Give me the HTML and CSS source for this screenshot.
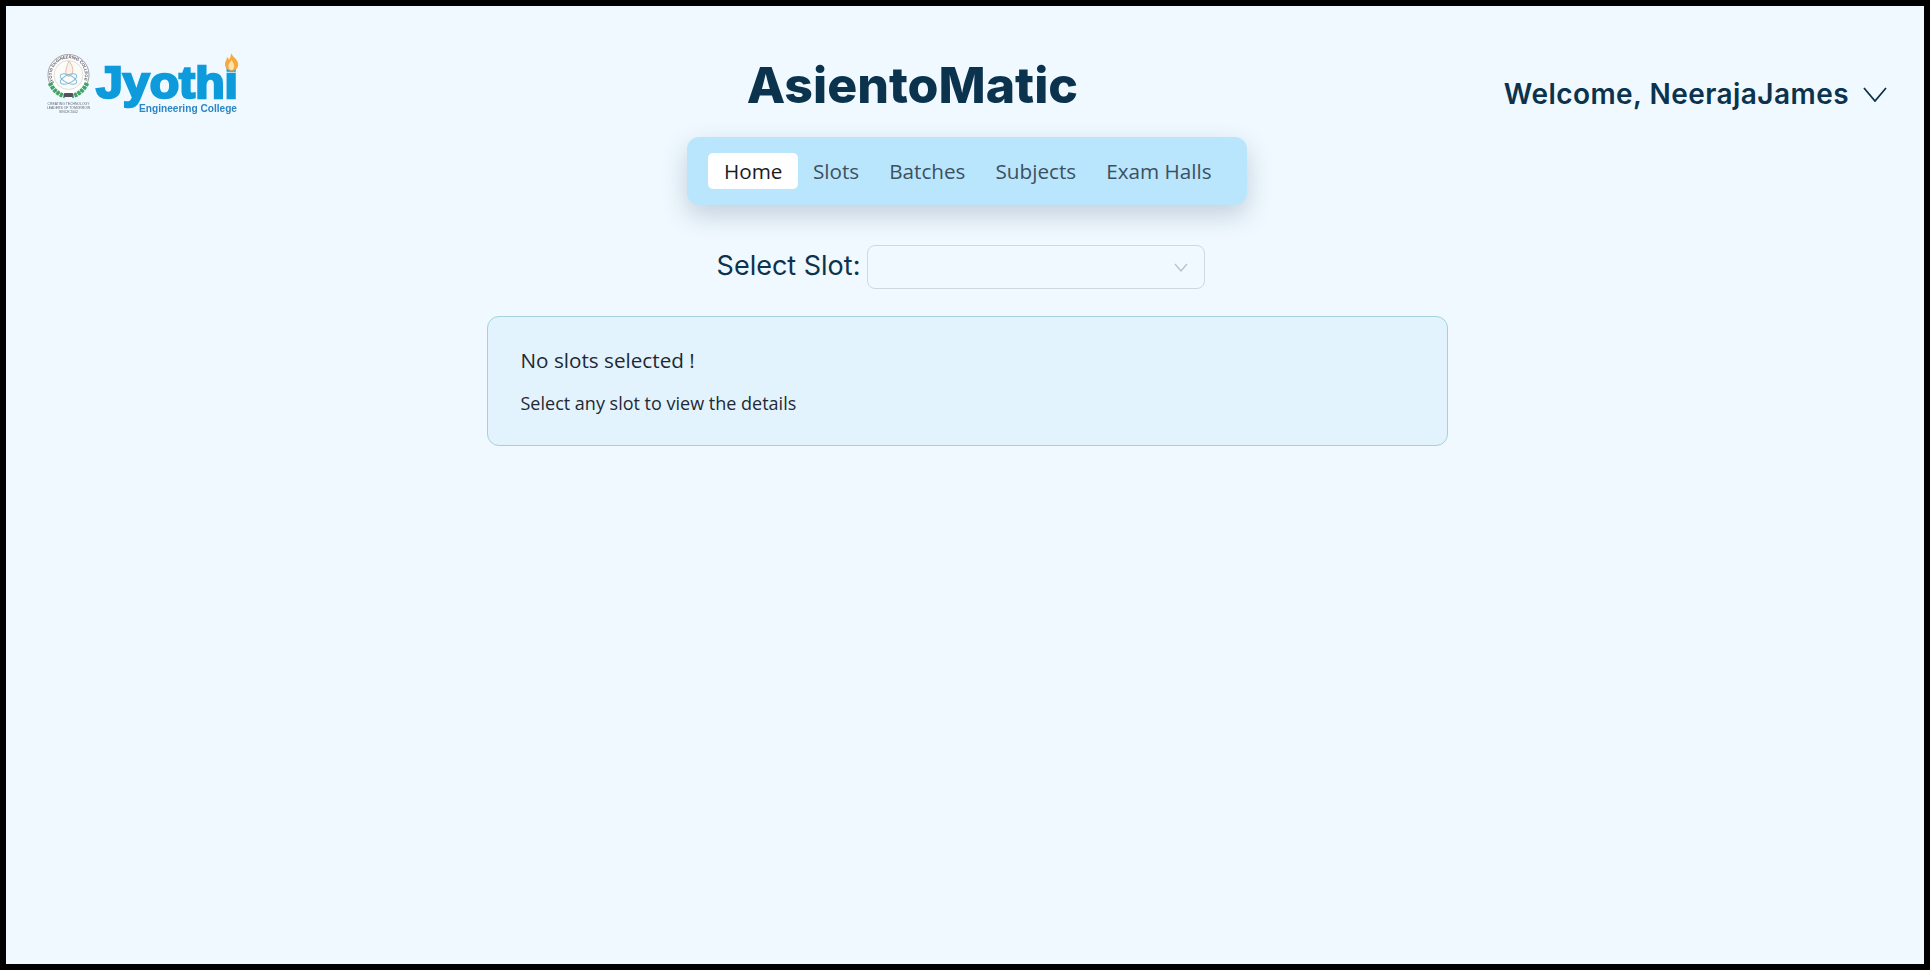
FILE: index.html
```html
<!DOCTYPE html>
<html lang="en">
<head>
    <meta charset="UTF-8">
    <title>AsientoMatic</title>
    <link rel="stylesheet" href="styles.css">
</head>
<body>
    <header class="top">
        <svg class="logo" viewBox="0 0 194 64" width="194" height="64">
            <defs>
                <path id="ring-text" d="M8.200 31A16.500 16.500 0 1 1 36.800 31"/>
            </defs>
            <circle cx="22.500" cy="23" r="20.500" fill="#fff" stroke="#8d8a94" stroke-width=".8"/>
            <circle cx="22.500" cy="23" r="14.500" fill="#fbfbf8" stroke="#c4bfbf" stroke-width=".5"/>
            <text class="logo-ring"><textPath href="#ring-text">JYOTHI ENGINEERING COLLEGE</textPath></text>
            <path d="M23 9c3 4 5 8 3 13-1 3-5 3-6 0-1-4 1-8 3-13z" fill="#fdf2ea" stroke="#dcae90" stroke-width=".8"/>
            <g fill="none" stroke="#79b7d6" stroke-width=".9">
                <ellipse cx="22.500" cy="27" rx="9" ry="4" transform="rotate(25 22.500 27)"/>
                <ellipse cx="22.500" cy="27" rx="9" ry="4" transform="rotate(-25 22.500 27)"/>
            </g>
            <path class="laurel" d="M4 31c3 7 9 12 15 13"/>
            <path class="laurel" d="M41 31c-3 7-9 12-15 13"/>
            <rect x="18" y="41" width="9" height="4" rx="1" fill="#55505a"/>
            <text class="logo-small" x="22.500" y="53">CREATING TECHNOLOGY</text>
            <text class="logo-small" x="22.500" y="57">LEADERS OF TOMORROW</text>
            <text class="logo-small" x="22.500" y="61">SINCE 2002</text>
            <text class="logo-name" x="50" y="46" textLength="142" lengthAdjust="spacingAndGlyphs">Jyothi</text>
            <text class="logo-college" x="93" y="60" textLength="98" lengthAdjust="spacingAndGlyphs">Engineering College</text>
            <path d="M185 1c1 3 6 6 7 10 1 4-2 8-6 8s-7-3-7-7c0-3 2-4 2-7 1 1 2 2 2 3 1-2 2-4 2-7z" fill="#f7a93b"/>
            <path d="M185.500 8c1 2 2.500 3 2.500 6s-1 4-2.500 4-3-1-3-4 2-3 3-6z" fill="#fde3b4"/>
        </svg>
        <h1 class="title">AsientoMatic</h1>
        <div class="user">
            <span>Welcome, NeerajaJames</span>
            <svg class="chevron" viewBox="0 0 24 15" width="24" height="15">
                <path d="M1 1l11 13L23 1" fill="none" stroke="currentColor" stroke-width="1.800"/>
            </svg>
        </div>
    </header>

    <main class="content">
        <nav class="tabs">
            <a class="tab tab-active">Home</a>
            <a class="tab">Slots</a>
            <a class="tab">Batches</a>
            <a class="tab">Subjects</a>
            <a class="tab">Exam Halls</a>
        </nav>

        <div class="slot-row">
            <label class="slot-label">Select Slot:</label>
            <div class="slot-select">
                <svg viewBox="0 0 14 9" width="14" height="9">
                    <path d="M1 1l6 7 6-7" fill="none" stroke="#b4c0cb" stroke-width="1.200"/>
                </svg>
            </div>
        </div>

        <section class="notice">
            <h2 class="notice-title">No slots selected !</h2>
            <p class="notice-text">Select any slot to view the details</p>
        </section>
    </main>
</body>
</html>
```

FILE: styles.css
```css
*{
    margin: 0;
    padding: 0;
    box-sizing: border-box;
}

body{
    height: 970px;
    border: 6px solid #000;
    background: #f0f9ff;
    font-family: "Open Sans", "Noto Sans", sans-serif;
    overflow: hidden;
}

.top{
    display: flex;
    justify-content: space-between;
    align-items: flex-start;
    height: 110px;
    padding: 46px 37px 0 40px;
}

.logo{
    display: block;
    filter: blur(.3px);
}
.logo-ring{
    font: 700 4.100px "Liberation Sans", sans-serif;
    fill: #5d5a66;
}
.logo-small{
    font: 400 3.400px "Liberation Sans", sans-serif;
    fill: #5f6470;
    text-anchor: middle;
}
.logo-name{
    font: 700 45px "Liberation Sans", sans-serif;
    fill: #0e9bdc;
    stroke: #0e9bdc;
    stroke-width: 2.400px;
}
.logo-college{
    font: 700 10px "Liberation Sans", sans-serif;
    fill: #2b86c5;
}
.laurel{
    fill: none;
    stroke: #3fa564;
    stroke-width: 4.500px;
    stroke-dasharray: 3 .8;
}

.title{
    margin-top: 3px;
    margin-left: 81px;
    font-family: Inter, sans-serif;
    font-size: 50px;
    font-weight: 800;
    line-height: 60px;
    color: #0b334d;
}

.user{
    display: flex;
    align-items: center;
    gap: 14px;
    margin-top: 24px;
    font-family: Inter, sans-serif;
    font-size: 28px;
    font-weight: 600;
    line-height: 36px;
    letter-spacing: .45px;
    color: #0b334d;
}

.content{
    display: flex;
    flex-direction: column;
    align-items: center;
    padding-left: 4px;
}

.tabs{
    display: flex;
    margin-top: 21px;
    padding: 16px 20px 16px 21px;
    background: #bae6fd;
    border-radius: 12px;
    box-shadow: 0 10px 26px rgba(30, 60, 90, .22);
}
.tab{
    padding: 0 15px;
    font-size: 20.700px;
    font-weight: 500;
    line-height: 36px;
    color: #3d5060;
    border-radius: 5px;
}
.tab-active{
    padding: 0 15.500px;
    background: #fff;
    color: #1c1c1e;
}

.slot-row{
    display: flex;
    align-items: center;
    gap: 7px;
    margin-top: 40px;
    margin-right: 12px;
}
.slot-label{
    padding-bottom: 4px;
    font-family: Inter, sans-serif;
    font-size: 27px;
    font-weight: 400;
    color: #0b334d;
}
.slot-select{
    display: flex;
    justify-content: flex-end;
    align-items: center;
    width: 338px;
    height: 44px;
    padding-right: 16px;
    border: 1px solid #ccd8e2;
    border-radius: 8px;
}

.notice{
    width: 961px;
    height: 130px;
    margin-top: 27px;
    padding: 29px 33px;
    background: #e2f3fe;
    border: 1px solid #a5d0dc;
    border-radius: 12px;
    color: #1f2933;
}
.notice-title{
    font-size: 20.700px;
    font-weight: 400;
    line-height: 28px;
}
.notice-text{
    margin-top: 17px;
    font-size: 18px;
    line-height: 25px;
}
```
